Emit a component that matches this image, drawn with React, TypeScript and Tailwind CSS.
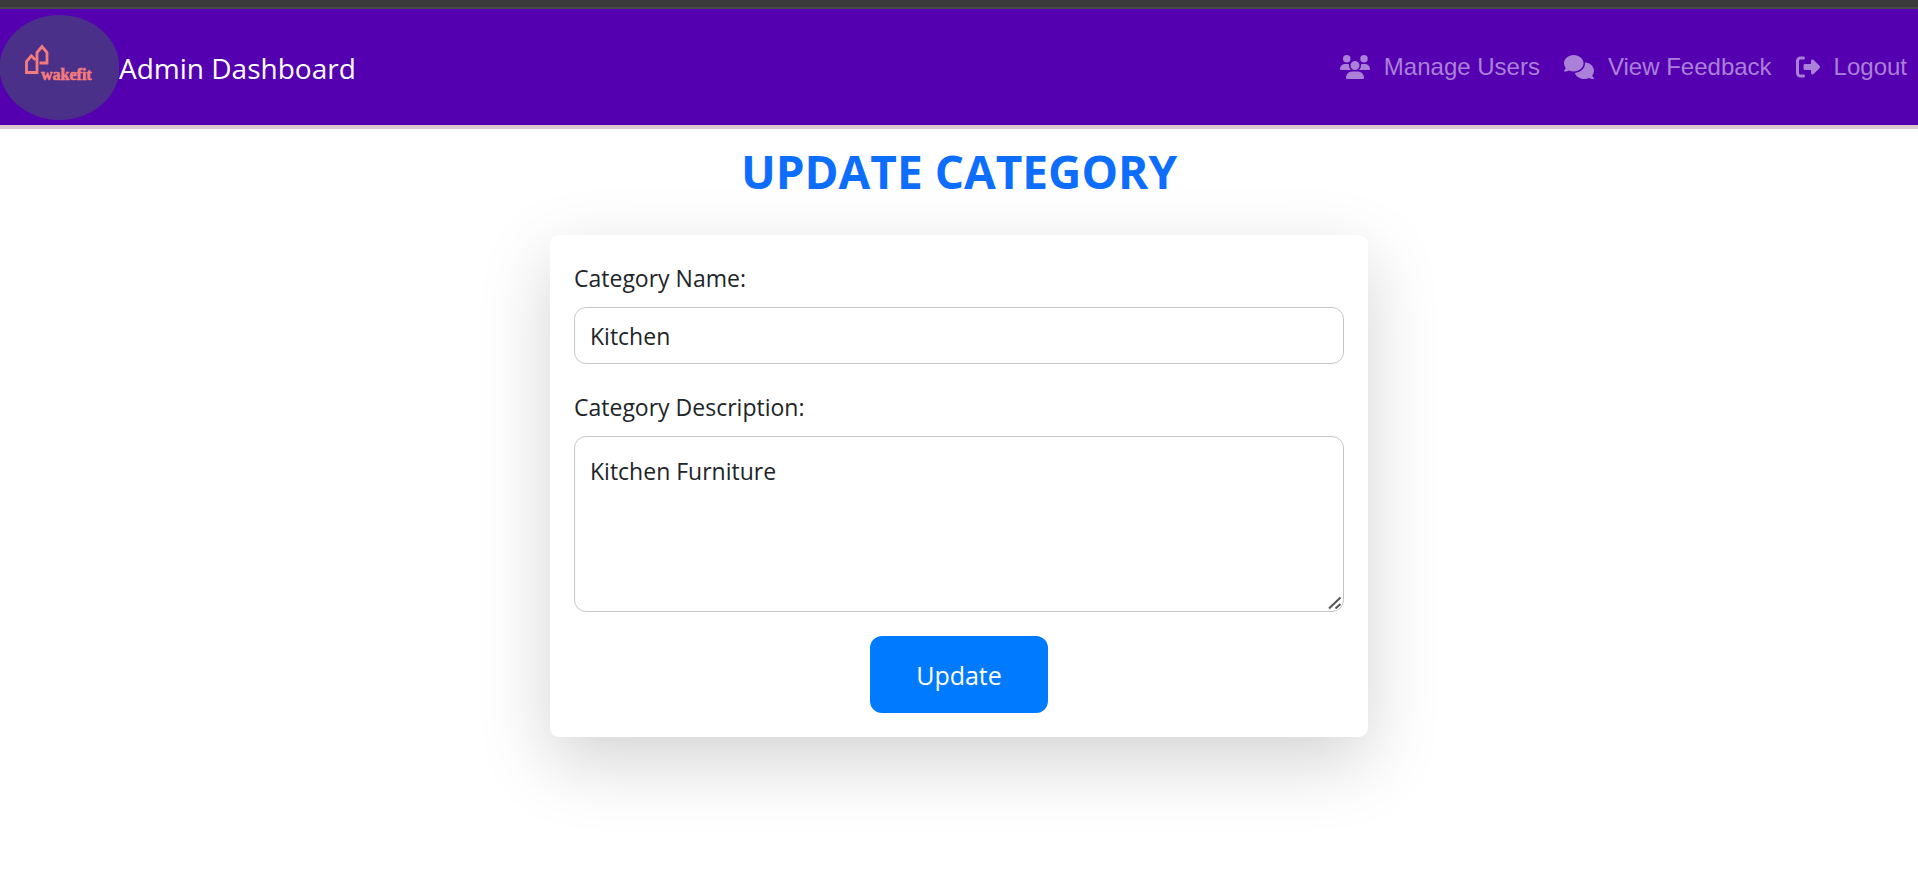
import { FaUsers, FaComments, FaRightFromBracket } from "react-icons/fa6";

const navLinks = [
  { label: "Manage Users", Icon: FaUsers, iconClass: "h-6 w-[30px]" },
  { label: "View Feedback", Icon: FaComments, iconClass: "h-6 w-[30px]" },
  { label: "Logout", Icon: FaRightFromBracket, iconClass: "h-6 w-6" },
];

function Logo() {
  return (
    <svg viewBox="0 0 119 105" className="h-[105px] w-[119px] shrink-0" role="img" aria-label="wakefit">
      <ellipse cx="59.5" cy="52.5" rx="60" ry="52.5" fill="#4a3089" />
      <g fill="none" stroke="#f47c7c" strokeWidth="2.8">
        <path d="M35.5 45 L31.3 40.8 L26.5 46.5 V57.5 H37 V37.5 L42 31.5 L47 37.5 V48 H39.5" />
      </g>
      <text
        x="41"
        y="65"
        fill="#f47c7c"
        stroke="#f47c7c"
        strokeWidth="0.6"
        className="font-['Liberation_Serif',serif] text-[16px] font-bold"
      >
        wakefit
      </text>
    </svg>
  );
}

function Navbar() {
  return (
    <header className="border-t-[7px] border-t-[#3b3b3b]">
      <nav className="flex items-center justify-between border-t-2 border-b-4 border-t-[#484848] border-b-[#dccad0] bg-[#5500b0] pt-1.5 pr-[11px] pb-[5px]">
        <a href="#" className="flex items-center text-[28px] text-white">
          <Logo />
          <span>Admin Dashboard</span>
        </a>
        <ul className="flex items-center gap-6 pb-0.5 font-['Liberation_Sans',Arial,sans-serif] text-2xl text-[#aa80d8]">
          {navLinks.map(({ label, Icon, iconClass }) => (
            <li key={label}>
              <a href="#" className="flex items-center gap-3.5">
                <Icon className={iconClass} />
                {label}
              </a>
            </li>
          ))}
        </ul>
      </nav>
    </header>
  );
}

export default function App() {
  return (
    <div className="min-h-screen bg-white font-['Open_Sans','Noto_Sans',sans-serif] text-[#212529]">
      <Navbar />
      <main className="px-6 pt-3 pb-12">
        <h1 className="text-center text-[46px] leading-[60px] font-bold text-[#0d6efd]">UPDATE CATEGORY</h1>
        <form
          className="mx-auto mt-[34px] flex w-full max-w-[818px] flex-col rounded-[9px] bg-white p-6 text-[23px] shadow-[0_24px_72px_rgba(0,0,0,0.175)]"
          onSubmit={(e) => e.preventDefault()}
        >
          <label htmlFor="category-name" className="mb-2.5 leading-[38px]">
            Category Name:
          </label>
          <input
            id="category-name"
            type="text"
            defaultValue="Kitchen"
            className="h-[57px] w-full rounded-xl border border-[#c6c6c6] px-[15px]"
          />
          <label htmlFor="category-description" className="mt-6 mb-2.5 leading-[38px]">
            Category Description:
          </label>
          <div className="relative flex">
            <textarea
              id="category-description"
              defaultValue="Kitchen Furniture"
              className="h-44 w-full resize-none rounded-xl border border-[#c6c6c6] px-[15px] py-4 leading-9"
            />
            <svg
              viewBox="0 0 14 14"
              className="pointer-events-none absolute right-0.5 bottom-0.5 h-3.5 w-3.5"
              fill="none"
              stroke="#555555"
              strokeWidth="2"
              aria-hidden="true"
            >
              <path d="M1 12.5 L12.5 1.5 M7.5 12.5 L12.5 8" />
            </svg>
          </div>
          <button
            type="submit"
            className="mt-6 h-[77px] self-center rounded-xl bg-[#007bff] px-[46px] pt-0.5 text-[25px] text-white"
          >
            Update
          </button>
        </form>
      </main>
    </div>
  );
}
